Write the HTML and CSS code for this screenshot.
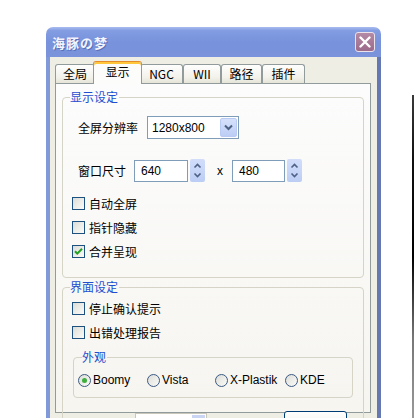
FILE: index.html
```html
<!DOCTYPE html>
<html lang="zh-CN">
<head>
    <meta charset="UTF-8">
    <meta name="viewport" content="width=device-width, initial-scale=1.0">
    <title>海豚の梦</title>
    <link rel="stylesheet" href="styles.css">
</head>
<body>
    <div class="screen">
        <div class="window">
            <div class="titlebar">
                <span class="title">海豚の梦</span>
                <button class="close" aria-label="关闭">
                    <svg width="12" height="12" viewBox="0 0 12 12">
                        <path d="M1.5 1.5 L10.5 10.5 M10.5 1.5 L1.5 10.5" stroke="#fff" stroke-width="2.4" stroke-linecap="round"/>
                    </svg>
                </button>
            </div>

            <div class="frame">
                <div class="tabs">
                    <div class="tab tab-w40">全局</div>
                    <div class="tab active">显示</div>
                    <div class="tab tab-w43">NGC</div>
                    <div class="tab tab-w38">WII</div>
                    <div class="tab tab-w41">路径</div>
                    <div class="tab tab-w43">插件</div>
                </div>

                <div class="panel">
                    <fieldset class="group group-display">
                        <legend>显示设定</legend>

                        <div class="row row-res">
                            <span class="label label-res">全屏分辨率</span>
                            <div class="select">
                                <span class="select-value">1280x800</span>
                                <span class="drop">
                                    <svg width="9" height="7" viewBox="0 0 9 7">
                                        <path d="M1 1.5 L4.5 5 L8 1.5" fill="none" stroke="#4d6185" stroke-width="2"/>
                                    </svg>
                                </span>
                            </div>
                        </div>

                        <div class="row row-size">
                            <span class="label label-size">窗口尺寸</span>
                            <div class="field field-w54">640</div>
                            <span class="spin-btn">
                                <svg width="15" height="23" viewBox="0 0 15 23">
                                    <path d="M4.5 8.5 L7.5 5.5 L10.5 8.5" fill="none" stroke="#4d6185" stroke-width="1.6"/>
                                    <path d="M4.5 14.5 L7.5 17.5 L10.5 14.5" fill="none" stroke="#4d6185" stroke-width="1.6"/>
                                </svg>
                            </span>
                            <span class="times">x</span>
                            <div class="field field-w53">480</div>
                            <span class="spin-btn">
                                <svg width="15" height="23" viewBox="0 0 15 23">
                                    <path d="M4.5 8.5 L7.5 5.5 L10.5 8.5" fill="none" stroke="#4d6185" stroke-width="1.6"/>
                                    <path d="M4.5 14.5 L7.5 17.5 L10.5 14.5" fill="none" stroke="#4d6185" stroke-width="1.6"/>
                                </svg>
                            </span>
                        </div>

                        <div class="checks checks-display">
                            <div class="check"><span class="box"></span>自动全屏</div>
                            <div class="check"><span class="box"></span>指针隐藏</div>
                            <div class="check">
                                <span class="box">
                                    <svg width="11" height="11" viewBox="0 0 11 11">
                                        <path d="M2 5.2 L4.3 7.6 L9 2.8" fill="none" stroke="#21a121" stroke-width="2"/>
                                    </svg>
                                </span>合并呈现
                            </div>
                        </div>
                    </fieldset>

                    <fieldset class="group group-ui">
                        <legend>界面设定</legend>

                        <div class="checks checks-ui">
                            <div class="check"><span class="box"></span>停止确认提示</div>
                            <div class="check"><span class="box"></span>出错处理报告</div>
                        </div>

                        <fieldset class="group group-look">
                            <legend>外观</legend>
                            <div class="radios">
                                <div class="radio"><span class="dot selected"></span>Boomy</div>
                                <div class="radio"><span class="dot"></span>Vista</div>
                                <div class="radio"><span class="dot"></span>X-Plastik</div>
                                <div class="radio"><span class="dot"></span>KDE</div>
                            </div>
                        </fieldset>

                        <div class="row row-bottom">
                            <div class="combo">
                                <span class="combo-drop"></span>
                            </div>
                            <div class="button"></div>
                        </div>
                    </fieldset>
                </div>
            </div>
        </div>
        <div class="edge"></div>
    </div>
</body>
</html>
```

FILE: styles.css
```css
* {
    margin: 0;
    padding: 0;
    box-sizing: border-box;
}

body {
    background: #fff;
    font-family: "Liberation Sans", "Noto Sans CJK SC", sans-serif;
    font-size: 12px;
    color: #000;
}

.screen {
    display: flex;
    width: 414px;
    height: 418px;
    overflow: hidden;
    background: #fff;
}

.window {
    flex: none;
    width: 335px;
    margin: 27px 0 0 46px;
}

/* title bar */
.titlebar {
    display: flex;
    align-items: center;
    justify-content: space-between;
    height: 30px;
    padding: 0 6px 0 6px;
    border-radius: 7px 7px 0 0;
    background: linear-gradient(#a9bcef 0%, #839de2 12%, #7892dc 50%, #7a93da 100%);
}

.title {
    font-family: "Noto Sans CJK SC", sans-serif;
    font-weight: bold;
    font-size: 13px;
    letter-spacing: 1px;
    color: #f2f5ff;
    text-shadow: 1px 1px 0 #5a70b8;
}

.close {
    display: flex;
    align-items: center;
    justify-content: center;
    width: 20px;
    height: 20px;
    border: 1px solid #ece2ea;
    border-radius: 3px;
    background: linear-gradient(#b48aa6, #9c6a8b);
}

/* frame */
.frame {
    height: 400px;
    padding: 4px 6px 0 5px;
    background: #efeee4;
    border-left: 4px solid #8199d9;
    border-right: 4px solid #6678b2;
}

.tabs {
    display: flex;
    align-items: flex-end;
    height: 22px;
}

.tab {
    display: flex;
    align-items: center;
    justify-content: center;
    height: 19px;
    border: 1px solid #919b9c;
    border-bottom: none;
    border-radius: 3px 3px 0 0;
    background: linear-gradient(#fefefe, #f2f1ea 70%, #e6e4d8);
    font-family: "Noto Sans CJK SC", sans-serif;
    font-size: 12px;
    line-height: 1;
}

.tab-w38 { width: 38px; }
.tab-w40 { width: 40px; }
.tab-w41 { width: 41px; }
.tab-w43 { width: 43px; }

.tab.active {
    position: relative;
    z-index: 1;
    width: 49px;
    height: 23px;
    margin: 0 -2px -1px;
    padding-bottom: 3px;
    border-top: 1px solid #e68b2c;
    box-shadow: inset 0 2px 0 #ffc83c;
    background: #fcfcfb;
}

/* tab panel */
.panel {
    height: 330px;
    padding: 6px 6px 0 6px;
    border: 1px solid #919b9c;
    background: linear-gradient(#fcfcfc, #f6f5f0);
}

.group {
    margin: 0;
    min-width: 0;
    padding: 0 7px 14px 7px;
    border: 1px solid #d5d4c6;
    border-radius: 4px;
}

.group legend {
    padding: 0 1px 0 0;
    font-family: "Noto Sans CJK SC", sans-serif;
    font-size: 12px;
    line-height: 14px;
    color: #1e4fd0;
}

.group-ui {
    margin-top: 2px;
}

.group-look {
    margin: 6px 3px 0;
    padding: 0 4px 5px;
}

.group-look legend {
    margin-left: 4px;
}

.row {
    display: flex;
    align-items: center;
}

.label {
    flex: none;
    font-family: "Noto Sans CJK SC", sans-serif;
}

.row-res {
    margin-top: 12px;
    height: 23px;
    padding-left: 8px;
}

.label-res { width: 69px; }

.select {
    display: flex;
    align-items: center;
    justify-content: space-between;
    width: 92px;
    height: 23px;
    padding: 1px 1px 1px 4px;
    border: 1px solid #7f9db9;
    background: #fff;
}

.drop {
    display: flex;
    align-items: center;
    justify-content: center;
    width: 17px;
    height: 19px;
    border: 1px solid #b9cbf5;
    border-radius: 2px;
    background: linear-gradient(#d6e1fb, #bccdf5);
}

.row-size {
    margin-top: 20px;
    height: 23px;
    padding-left: 8px;
}

.label-size { width: 56px; }

.field {
    height: 22px;
    padding: 3px 0 0 6px;
    border: 1px solid #7f9db9;
    background: #fff;
}

.field-w54 { width: 54px; }
.field-w53 { width: 53px; }

.spin-btn {
    display: flex;
    width: 15px;
    height: 23px;
    margin-left: 2px;
    border-radius: 2px;
    background: linear-gradient(#d2ddfa, #bccdf4);
}

.times {
    margin: 0 9px 0 12px;
}

/* checkboxes */
.checks-display {
    margin-top: 9px;
}

.checks-ui {
    margin-top: 2px;
}

.check {
    display: flex;
    align-items: center;
    gap: 4px;
    height: 24px;
    padding-left: 2px;
    font-family: "Noto Sans CJK SC", sans-serif;
}

.box {
    display: flex;
    align-items: center;
    justify-content: center;
    width: 13px;
    height: 13px;
    border: 1px solid #1c5180;
    background: linear-gradient(135deg, #dcdcd7, #fbfbf9);
}

/* radios */
.radios {
    display: grid;
    grid-template-columns: 69px 68px 70px auto;
    height: 24px;
    margin-top: 4px;
}

.radio {
    display: flex;
    align-items: center;
    gap: 2px;
}

.dot {
    display: flex;
    align-items: center;
    justify-content: center;
    width: 13px;
    height: 13px;
    border: 1px solid #3b5a82;
    border-radius: 50%;
    background: linear-gradient(135deg, #dcdcd7, #fbfbf9);
}

.dot.selected::after {
    content: "";
    width: 5px;
    height: 5px;
    border-radius: 50%;
    background: #3fae3f;
}

/* bottom row, mostly cut off */
.row-bottom {
    margin-top: 13px;
    height: 23px;
    align-items: flex-start;
}

.combo {
    display: flex;
    justify-content: flex-end;
    width: 72px;
    height: 21px;
    margin: 2px 0 0 65px;
    padding: 1px;
    border: 1px solid #c9c7ba;
    background: #fff;
}

.combo-drop {
    width: 13px;
    height: 18px;
    background: #c9d5f2;
}

.button {
    width: 63px;
    height: 23px;
    margin: 0 9px 0 auto;
    border: 1px solid #003c74;
    border-radius: 3px;
    background: linear-gradient(#fff, #ecebe6);
}

/* dark edge on the right */
.edge {
    width: 2px;
    height: 323px;
    margin: 95px 0 0 auto;
    background: linear-gradient(#3a3a3a, #111 20%, #000 50%, #777 75%, #999);
}
```
